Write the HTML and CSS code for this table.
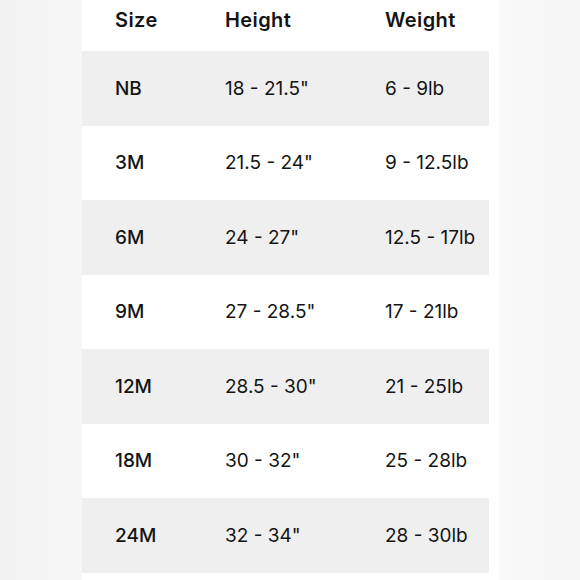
FILE: index.html
```html
<!DOCTYPE html>
<html lang="en">
<head>
<meta charset="utf-8">
<title>Size chart</title>
<link rel="stylesheet" href="styles.css">
</head>
<body>
<div class="page">
  <div class="panel">
    <div class="row head">
      <div class="cell">Size</div><div class="cell">Height</div><div class="cell">Weight</div>
    </div>
    <div class="row alt"><div class="cell">NB</div><div class="cell">18 - 21.5"</div><div class="cell">6 - 9lb</div></div>
    <div class="row"><div class="cell">3M</div><div class="cell">21.5 - 24"</div><div class="cell">9 - 12.5lb</div></div>
    <div class="row alt"><div class="cell">6M</div><div class="cell">24 - 27"</div><div class="cell">12.5 - 17lb</div></div>
    <div class="row"><div class="cell">9M</div><div class="cell">27 - 28.5"</div><div class="cell">17 - 21lb</div></div>
    <div class="row alt"><div class="cell">12M</div><div class="cell">28.5 - 30"</div><div class="cell">21 - 25lb</div></div>
    <div class="row"><div class="cell">18M</div><div class="cell">30 - 32"</div><div class="cell">25 - 28lb</div></div>
    <div class="row alt"><div class="cell">24M</div><div class="cell">32 - 34"</div><div class="cell">28 - 30lb</div></div>
  </div>
</div>
</body>
</html>
```
FILE: styles.css
```css
html, body {
  margin: 0;
  padding: 0;
}
body {
  width: 580px;
  height: 580px;
  overflow: hidden;
  background: linear-gradient(90deg, #f1f1f1 0%, #f7f7f7 14%, #f9f9f9 86%, #f6f6f6 100%);
  font-family: "Inter", "Lato", sans-serif;
  color: #141414;
}
.page {
  padding-left: 82px;
}
.panel {
  width: 417px;
  height: 580px;
  background: #ffffff;
  box-sizing: border-box;
  padding-right: 10px;
}
.row {
  display: grid;
  grid-template-columns: 143px 160px 1fr;
  height: 74.5px;
  align-items: center;
  font-size: 19px;
  font-weight: 400;
}
.row .cell:first-child {
  padding-left: 33px;
  font-weight: 500;
}
.row.head {
  height: 51px;
  font-size: 20px;
  font-weight: 600;
  letter-spacing: 0.4px;
  align-items: start;
}
.row.head .cell {
  padding-top: 8px;
}
.row.head .cell:first-child {
  font-weight: 600;
}
.row.alt {
  background: #efefef;
}
```
